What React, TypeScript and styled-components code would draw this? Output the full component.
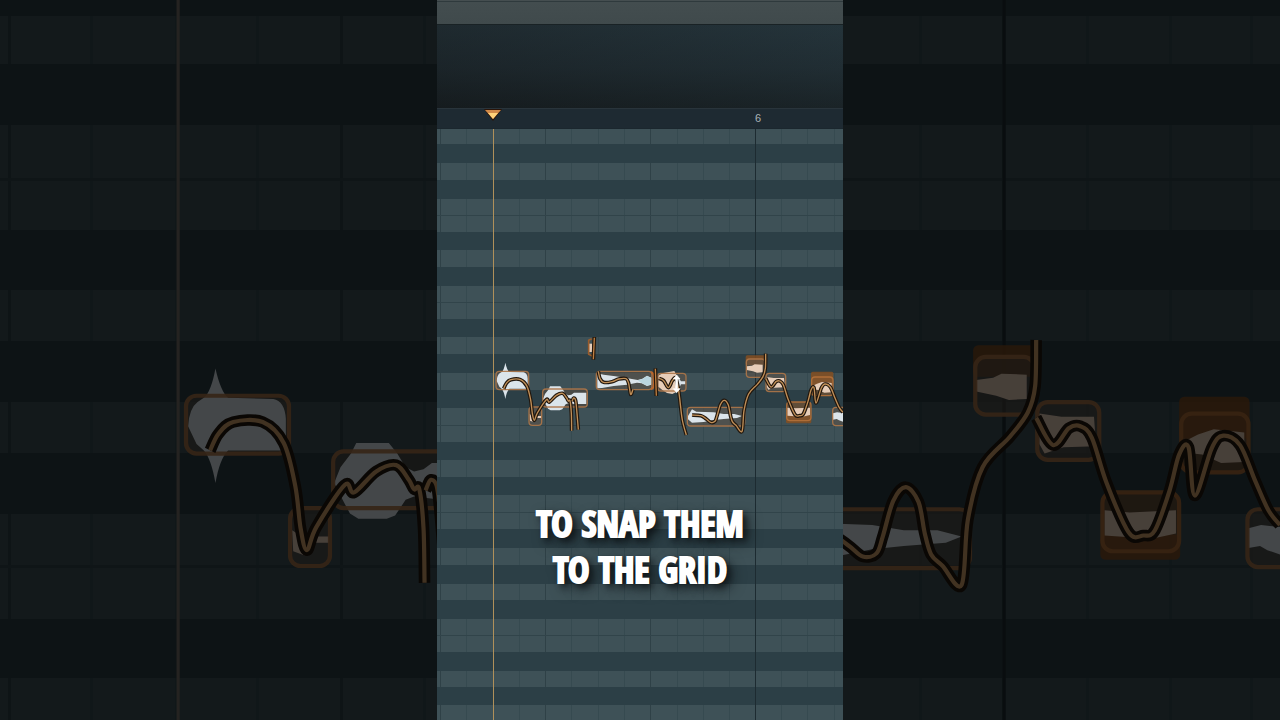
import React from "react";
import styled, { createGlobalStyle, css } from "styled-components";

const GlobalStyle = createGlobalStyle`
  *, *::before, *::after { box-sizing: border-box; }
  body {
    margin: 0;
    background: #000;
    font-family: "Liberation Sans", Arial, sans-serif;
  }
`;

type Tone = "light" | "dark";
type RowData = { tone: Tone; height: number; ruled?: boolean };

const light = (height: number, ruled = false): RowData => ({ tone: "light", height, ruled });
const dark = (height: number): RowData => ({ tone: "dark", height });

const rollRows: RowData[] = [
  light(15), dark(19), light(17), dark(19), light(17, true), light(16), dark(18),
  light(17), dark(19), light(17, true), light(16), dark(18), light(17), dark(19),
  light(17), dark(18), light(18, true), light(16), dark(18), light(17), dark(18),
  light(18, true), light(16), dark(19), light(17), dark(19), light(16), dark(19),
  light(17, true), light(16), dark(19), light(16), dark(18), light(15),
];

const ambientRows: RowData[] = [
  dark(16), light(48), dark(61), light(56, true), light(49), dark(60), light(51),
  dark(61), light(51), dark(61), light(54, true), light(51), dark(59), light(42),
];

const rollTracks = [4, 26, 27, 26, 26, 26, 27, 26, 26, 27, 26, 26, 26, 26, 26, 27, 8];
const ambientTracks = [11, 82, 85, 81, 84, 83, 83, 83, 82, 83, 83, 82, 83, 84, 83, 81, 27];

const Stage = styled.main`
  display: grid;
  grid-template-columns: 437fr 406fr 437fr;
  min-height: 100vh;
  overflow: hidden;
  background: #000;
`;

const Ambient = styled.div`
  grid-area: 1 / 1 / 2 / 4;
  position: relative;
  overflow: hidden;
  opacity: 0.31;
`;

const Phone = styled.section`
  grid-area: 1 / 2 / 2 / 3;
  position: relative;
  display: flex;
  flex-direction: column;
  background: #2c3f46;
  overflow: hidden;
`;

const TitleBar = styled.header`
  height: 25px;
  border-bottom: 1px solid #192225;
  background: linear-gradient(#454e50 0 1px, #2f3a3d 1px 2px, #434d4f 2px, #404a4c);
`;

const Toolbar = styled.div`
  height: 83px;
  background:
    linear-gradient(to right, rgba(20, 24, 26, 0.35), rgba(38, 54, 60, 0.25)),
    linear-gradient(#24333a, #1f2b31 50%, #161d20);
`;

const Ruler = styled.div`
  display: grid;
  grid-template-columns: 47fr 18fr 253fr 88fr;
  height: 21px;
  border-top: 1px solid #29343b;
  border-bottom: 1px solid #1b272e;
  background: #1e2a32;
`;

const PlayMarker = styled.svg`
  grid-column: 2;
  width: 18px;
  height: 12px;
`;

const BarNumber = styled.span`
  grid-column: 4;
  color: #a9b3b6;
  font-size: 11px;
  line-height: 18px;
`;

const Roll = styled.div`
  position: relative;
  flex: 1;
`;

const Row = styled.div<{ $data: RowData; $tracks: number[]; $rule: number }>`
  display: grid;
  grid-template-columns: ${({ $tracks }) => $tracks.map((t) => `${t}fr`).join(" ")};
  height: ${({ $data }) => $data.height}px;
  background: ${({ $data }) => ($data.tone === "light" ? "#3e5157" : "#2c3f46")};
  ${({ $data, $rule }) =>
    $data.ruled &&
    css`
      border-bottom: ${$rule}px solid #31444a;
    `}
`;

const Cell = styled.span<{ $beat: boolean; $rule: number }>`
  border-right: ${({ $rule }) => $rule}px solid ${({ $beat }) => ($beat ? "#2f4147" : "#364a50")};
  &:last-child {
    border-right: 0;
  }
`;

const Overlay = styled.svg`
  position: absolute;
  inset: 0;
  width: 100%;
  height: 100%;
`;

const Caption = styled.p`
  position: absolute;
  top: 501px;
  left: 0;
  right: 0;
  margin: 0;
  text-align: center;
  text-transform: uppercase;
  color: #fff;
  font-family: Impact, "Open Sans Condensed", "Liberation Sans Narrow", "Liberation Sans", sans-serif;
  font-size: 36px;
  font-weight: 700;
  line-height: 46px;
  -webkit-text-stroke: 2px #fff;
  text-shadow:
    1px 1px 1px #10181b,
    0 0 2px #10181b,
    4px 4px 6px rgba(8, 10, 12, 0.8),
    6px 6px 14px rgba(8, 10, 12, 0.65);
`;

const Line = styled.span`
  display: block;
`;

function Grid({ rows, tracks, rule }: { rows: RowData[]; tracks: number[]; rule: number }) {
  return (
    <div>
      {rows.map((row, i) => (
        <Row key={i} $data={row} $tracks={tracks} $rule={rule}>
          {row.tone === "light" &&
            tracks.map((_, c) => <Cell key={c} $beat={c % 4 === 0} $rule={rule} />)}
        </Row>
      ))}
    </div>
  );
}

type Point = [number, number];

// Catmull-Rom spline through the pitch points, written as cubic segments.
function smooth(points: Point[]): string {
  let d = `M${points[0][0]} ${points[0][1]}`;
  for (let i = 0; i < points.length - 1; i++) {
    const p0 = points[i - 1] ?? points[i];
    const p1 = points[i];
    const p2 = points[i + 1];
    const p3 = points[i + 2] ?? p2;
    const a = [p1[0] + (p2[0] - p0[0]) / 6, p1[1] + (p2[1] - p0[1]) / 6];
    const b = [p2[0] - (p3[0] - p1[0]) / 6, p2[1] - (p3[1] - p1[1]) / 6];
    d += `C${a[0].toFixed(1)} ${a[1].toFixed(1)} ${b[0].toFixed(1)} ${b[1].toFixed(1)} ${p2[0]} ${p2[1]}`;
  }
  return d;
}

const pitchCurves: Point[][] = [
  [[200, 446], [208, 430], [222, 419], [250, 419], [270, 439], [281, 480], [286, 520], [292, 541], [301, 519], [328, 479], [337, 486], [358, 466], [377, 460], [389, 474], [394, 483], [399, 483], [403, 520], [404, 572]],
  [[405, 484], [410, 474], [416, 482], [420, 520], [424, 569]],
  [[484, 394], [489, 416], [500, 427], [525, 425], [545, 417], [567, 416], [575, 430], [581, 463], [588, 448]],
  [[666, 415], [680, 422], [694, 443], [706, 422], [716, 414], [723, 440], [728, 475], [736, 540], [748, 585]],
  [[765, 525], [792, 527], [808, 537], [821, 547], [834, 544], [840, 528], [850, 494], [862, 481], [874, 495], [880, 525], [886, 545], [897, 556], [915, 574], [921, 512], [935, 462], [961, 433], [978, 410], [985, 385], [986, 341]],
  [[986, 415], [1002, 441], [1017, 425], [1028, 423], [1039, 434], [1053, 477], [1074, 524], [1088, 527], [1099, 522], [1113, 484], [1122, 450], [1131, 443], [1137, 489], [1153, 444], [1164, 432], [1180, 441], [1194, 474], [1207, 503], [1218, 517]],
];

type NoteData = { x: number; y: number; w: number; h: number; glow?: [number, number]; hot?: boolean };

const notes: NoteData[] = [
  { x: 177, y: 394, w: 98, h: 55 },
  { x: 276, y: 501, w: 38, h: 55 },
  { x: 317, y: 447, w: 134, h: 54 },
  { x: 478, y: 394, w: 167, h: 55 },
  { x: 662, y: 400, w: 85, h: 53 },
  { x: 751, y: 502, w: 172, h: 56 },
  { x: 928, y: 357, w: 56, h: 55, glow: [346, 30] },
  { x: 987, y: 400, w: 59, h: 55 },
  { x: 1049, y: 486, w: 73, h: 56, glow: [526, 24], hot: true },
  { x: 1124, y: 411, w: 64, h: 56, glow: [395, 40], hot: true },
  { x: 1187, y: 502, w: 70, h: 55 },
];

const coolWaves = [
  "M179 423Q180 406 188 400L194 396Q201 390 205 368Q210 390 217 396L260 397Q271 399 272 416V446H217Q209 454 205 477Q201 454 194 446L187 440Z",
  "M318 477L324 462L334 449L339 439H370L378 449L386 462L394 466L403 464L411 458H448V492H412L394 490L386 493L376 508L368 511H341L333 506L327 495Z",
  "M481 400L500 404L535 409L568 414L602 420L616 416L630 407L643 413V434L630 438L614 430L600 428L570 434L530 438L495 444L481 445Z",
  "M720 418H728L732 424H745V433H732L728 442H720Z",
  "M753 528L765 508L778 515L830 517L860 522L892 522L915 528L900 534L860 537L830 540L800 546L765 548L753 538Z",
  "M1188 520L1200 517L1218 519V545L1206 541L1199 537L1188 539Z",
];

const warmWaves = [
  "M278 522L287 528L292 541L300 528H313V534H298L290 546L279 542Z",
  "M455 311H465V336H455Z",
  "M664 407L678 399L700 395L712 393L718 404V456L706 462L690 459L676 450L664 440Z",
  "M929 379L945 377L953 373L977 374V397L960 398L948 394L929 390Z",
  "M989 411L1010 414L1041 414L1043 442L1012 443L994 449L989 440Z",
  "M1051 503L1075 505L1119 503V525L1096 530L1051 527Z",
  "M1126 438L1140 431L1155 426L1184 429V457L1162 458L1144 450L1126 448Z",
];

type NoteLayerProps = { viewBox: string; fit: string; playhead: string; curve: string };

function NoteLayer({ viewBox, fit, playhead, curve }: NoteLayerProps) {
  return (
    <Overlay viewBox={viewBox} preserveAspectRatio={fit} aria-hidden="true" fill="none">
      <path d="M955.5 -720V1440" stroke="#1d2b31" strokeWidth="3" />
      <path d="M169.5 -720V1440" stroke={playhead} strokeWidth="3" />

      {notes.map((n, i) => (
        <g key={i}>
          {n.glow && (
            <rect x={n.x - 2} y={n.glow[0]} width={n.w + 3} height={n.glow[1]} rx="5" fill="#8a4f1e" fillOpacity="0.8" />
          )}
          <rect x={n.x} y={n.y} width={n.w} height={n.h} rx="10" fill={n.hot ? "#84562f" : "#5c5148"} fillOpacity="0.6" />
        </g>
      ))}
      {coolWaves.map((d, i) => (
        <path key={i} d={d} fill="#dbe4ea" />
      ))}
      {warmWaves.map((d, i) => (
        <path key={i} d={d} fill="#e6cdb9" />
      ))}
      <path d="M602 421L616 417L630 408L643 414V433L630 437L614 429Z" fill="#b9d5df" />
      {notes.map((n, i) => (
        <rect
          key={i}
          x={n.x}
          y={n.y}
          width={n.w}
          height={n.h}
          rx="10"
          stroke={n.hot ? "#b47038" : "#ad7648"}
          strokeWidth="4"
          strokeOpacity="0.9"
        />
      ))}

      <path d="M464 296L455 301V343L466 348" stroke="#9a5c2c" strokeWidth="5" strokeLinejoin="round" />
      <path d="M642 396Q651 400 651 412V432Q651 444 642 448" stroke="#b8662c" strokeWidth="6" />
      <path d="M472 291L469 359M655 385L658 468" stroke="#24170c" strokeWidth="11" />
      <path d="M472 293L469 358M655 386L658 467" stroke="#bd7f42" strokeWidth="4" />

      {pitchCurves.map((points, i) => (
        <path key={i} d={smooth(points)} stroke="#21170e" strokeWidth="11" strokeLinejoin="round" />
      ))}
      {pitchCurves.map((points, i) => (
        <path key={i} d={smooth(points)} stroke={curve} strokeWidth="4" strokeLinejoin="round" />
      ))}
    </Overlay>
  );
}

function ResizeCursor() {
  return (
    <Overlay viewBox="0 -333 1218 1773" preserveAspectRatio="xMidYMin meet" aria-hidden="true">
      <path
        d="M719 405L729 417H722V446H729L719 458L709 446H716V417H709Z"
        fill="#fff"
        stroke="#fff"
        strokeWidth="2"
      />
    </Overlay>
  );
}

export default function App() {
  return (
    <>
      <GlobalStyle />
      <Stage>
        <Ambient>
          <Grid rows={ambientRows} tracks={ambientTracks} rule={3} />
          <NoteLayer
            viewBox="0 -720 1218 2160"
            fit="xMidYMid slice"
            playhead="#77736a"
            curve="#d3a06a"
          />
        </Ambient>
        <Phone>
          <TitleBar />
          <Toolbar />
          <Ruler>
            <PlayMarker viewBox="0 0 18 12" aria-hidden="true">
              <path d="M0 0H18L9 12Z" fill="#2a1408" />
              <path d="M1 1H17L9 10Z" fill="#d28a4a" />
              <path d="M4 4H14L9 10Z" fill="#ffd27a" />
            </PlayMarker>
            <BarNumber>6</BarNumber>
          </Ruler>
          <Roll>
            <Grid rows={rollRows} tracks={rollTracks} rule={1} />
            <NoteLayer
              viewBox="0 -333 1218 1773"
              fit="xMidYMin meet"
              playhead="#b0905a"
              curve="#c08f58"
            />
            <ResizeCursor />
          </Roll>
          <Caption>
            <Line>To snap them</Line>
            <Line>to the grid</Line>
          </Caption>
        </Phone>
      </Stage>
    </>
  );
}
